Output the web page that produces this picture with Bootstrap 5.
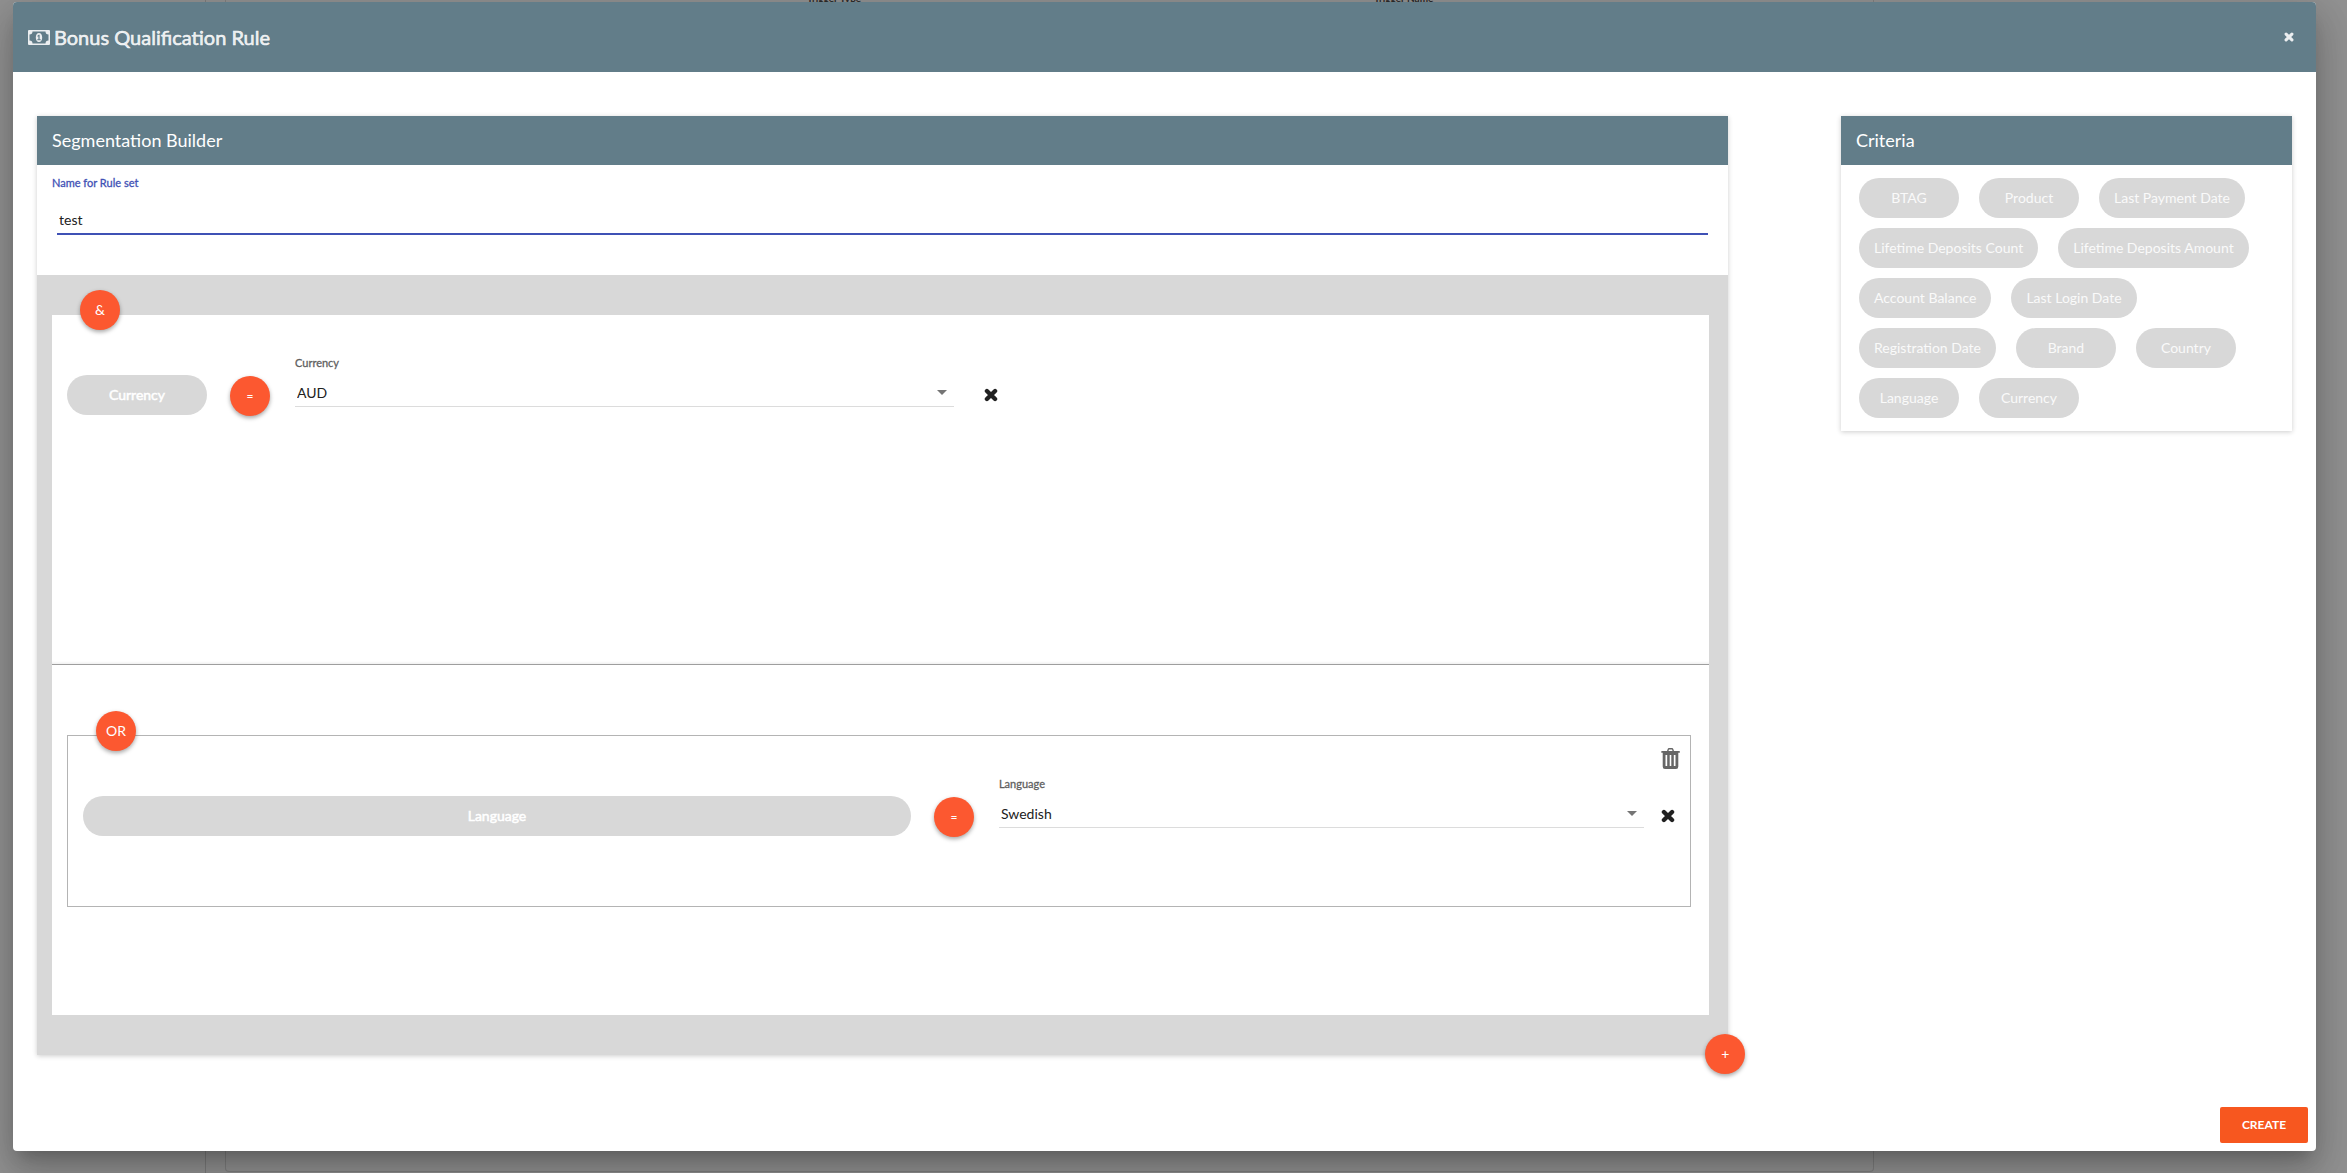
<!DOCTYPE html>
<html lang="en">
<head>
<meta charset="utf-8">
<meta name="viewport" content="width=device-width, initial-scale=1">
<title>Bonus Qualification Rule</title>
<link rel="stylesheet" href="https://cdn.jsdelivr.net/npm/bootstrap@5.3.0/dist/css/bootstrap.min.css">
<style>
  :root { --slate: #627d89; --flame: #fc5830; --mist: #d8d8d8; --ink: #212121; }
  body { font-family: Lato, sans-serif; font-size: 14px; line-height: 20px; color: var(--ink); background: #929292; min-height: 100vh; overflow: hidden; }

  /* page behind the dialog */
  .backdrop-page { position: absolute; inset: 0; z-index: 0; overflow: hidden; }
  .backdrop-side { flex: 0 0 206px; border-right: 1px solid #7c7c7c; }
  .backdrop-panel { margin-left: 19px; width: 1649px; border: 1px solid #7f7f7f; border-top: 0; border-radius: 0 0 4px 4px; height: 1172px; }
  .backdrop-labels { padding-left: 581px; font-size: 10px; font-weight: 700; line-height: 14px; margin-top: -9px; color: #2b2b2b; }
  .backdrop-labels span { flex: 0 0 567px; }
  .backdrop-labels span:last-child { flex: none; }

  .dialog-shell { z-index: 1; margin: 2px 31px 22px 13px; min-height: calc(100vh - 24px); background: #fff; border-radius: 4px;
    box-shadow: 0 11px 15px -7px rgba(0,0,0,.2), 0 24px 38px 3px rgba(0,0,0,.14), 0 9px 46px 8px rgba(0,0,0,.12); }
  .dialog-head { height: 70px; background: var(--slate); color: rgba(255,255,255,.87); border-radius: 4px 4px 0 0; padding: 0 22px 0 15px; }
  .dialog-head h1 { font-size: 20px; line-height: 24px; font-weight: 400; -webkit-text-stroke: .6px; margin: 0; }
  .dialog-main { padding: 44px 24px 0; }
  .icon-btn { background: none; border: 0; padding: 0; color: inherit; line-height: 0; flex: none; }

  .sheet { background: #fff; box-shadow: 0 1px 5px rgba(0,0,0,.2); }
  .sheet-head { background: var(--slate); color: #fff; height: 49px; padding: 0 15px; font-size: 18px; font-weight: 400; line-height: 49px; margin: 0; }
  .builder { width: 75%; }
  .criteria { width: 20%; }

  .rule-name { height: 110px; padding: 10px 20px 0 15px; }
  .tiny-label { font-size: 11px; line-height: 16px; font-weight: 400; color: #5f5f5f; -webkit-text-stroke: .3px; }
  .rule-name .tiny-label { color: #3f51b5; }
  .rule-name input { border: 0; border-bottom: 2px solid #3f51b5; border-radius: 0; padding: 4px 2px 0; height: 33px; margin: 11px 0 0 5px; width: calc(100% - 5px); font-size: 14px; color: var(--ink); background: transparent; outline: 0; }

  .canvas-area { background: var(--mist); padding: 40px 19px 40px 15px; }
  .rule-zone { background: #fff; }
  .zone-top { height: 350px; border-bottom: 1px solid #9e9e9e; padding: 40px 15px 0; box-shadow: inset 0 -3px 3px -2px rgba(0,0,0,.08); }
  .zone-bottom { height: 350px; padding: 70px 18px 0 15px; }
  .or-group { border: 1px solid #b4b4b4; height: 172px; padding: 40px 15px 0; }

  .round-btn { width: 40px; height: 40px; border: 0; border-radius: 50%; padding: 0; background: var(--flame); color: #fff; font-size: 14px; line-height: 40px; text-align: center; box-shadow: 0 2px 4px rgba(0,0,0,.35); flex: none; }
  .round-btn.sign { font-size: 12px; margin: 2px 25px 0 23px; }
  .pin-group { left: 28px; top: -25px; }
  .pin-trash { right: 10px; top: 12px; color: #666; }
  .pin-add { right: -17px; bottom: -19px; }

  .pill { height: 40px; border: 0; border-radius: 20px; background: var(--mist); color: #fafafa; font-size: 14px; line-height: 40px; padding: 0 15px; min-width: 100px; text-align: center; }
  .pill.picked { color: #fff; -webkit-text-stroke: .5px; padding: 0; }
  .pill-fixed { width: 140px; }
  .pill-half { width: 52%; }
  .picker { padding-bottom: 28px; }
  .picker-part { width: 40.5%; }
  .picker select { display: block; width: 100%; appearance: none; border: 0; border-bottom: 1px solid #dcdcdc; border-radius: 0; background: transparent; font-size: 14px; height: 28px; padding: 0 24px 0 2px; color: var(--ink); }
  .picker label { display: block; margin-bottom: 8px; }
  .picker-arrow { right: 7px; bottom: 40px; width: 0; height: 0; border: 5px solid transparent; border-top-color: #757575; border-bottom: 0; pointer-events: none; }
  .after-part { margin-left: 30px; }
  .after-fill { margin-left: 17px; }

  .pill-list { padding: 13px 15px 13px 18px; gap: 10px 20px; }
  .dialog-foot { padding: 8px; }
  .btn-create { background: #f7571f; color: #fff; font-size: 12px; line-height: 36px; font-weight: 700; height: 36px; width: 88px; padding: 0; border: 0; border-radius: 2px; }
  .btn-create:hover { background: #e24c17; color: #fff; }
</style>
<script src="https://cdn.jsdelivr.net/npm/bootstrap@5.3.0/dist/js/bootstrap.bundle.min.js"></script>
</head>
<body class="d-flex flex-column position-relative">

<svg width="0" height="0" class="position-absolute" aria-hidden="true">
  <symbol id="cross" viewBox="0 0 12 12"><path d="M2.5 2.5 9.500 9.500M9.500 2.500 2.500 9.500" stroke="currentColor" stroke-width="3.700" stroke-linecap="round"/></symbol>
</svg>

<div class="backdrop-page d-flex" aria-hidden="true">
  <div class="backdrop-side"></div>
  <div class="backdrop-panel">
    <div class="backdrop-labels d-flex"><span>Trigger Type</span><span>Trigger Name</span></div>
  </div>
</div>

<div class="dialog-shell position-relative d-flex flex-column flex-grow-1" role="dialog" aria-labelledby="dlgTitle">
  <header class="dialog-head d-flex align-items-center justify-content-between">
    <div class="d-flex align-items-center gap-1">
      <svg width="22" height="15" viewBox="0 0 22 15" aria-hidden="true">
        <path fill="currentColor" fill-rule="evenodd" d="M1 0H21Q22 0 22 1V14Q22 15 21 15H1Q0 15 0 14V1Q0 0 1 0ZM4.500 1.500A3 3 0 0 1 1.500 4.500V10.500A3 3 0 0 1 4.500 13.500H17.500A3 3 0 0 1 20.500 10.500V4.500A3 3 0 0 1 17.500 1.500ZM11 3C13 3 14.200 5 14.200 7.500S13 12 11 12 7.800 10 7.800 7.500 9 3 11 3ZM10.600 4.700 9.200 6 9.900 6.700 10.400 6.300V9.200H9.300V10.200H12.700V9.200H11.600V4.700Z"/>
      </svg>
      <h1 id="dlgTitle">Bonus Qualification Rule</h1>
    </div>
    <button type="button" class="icon-btn" aria-label="Close"><svg width="10" height="12"><use href="#cross"/></svg></button>
  </header>

  <main class="dialog-main d-flex justify-content-between align-items-start">
    <section class="builder sheet position-relative">
      <h2 class="sheet-head">Segmentation Builder</h2>
      <div class="rule-name">
        <label class="tiny-label d-block" for="ruleName">Name for Rule set</label>
        <input type="text" id="ruleName" value="test">
      </div>
      <div class="canvas-area">
        <div class="rule-zone position-relative">
          <button type="button" class="round-btn pin-group position-absolute">&amp;</button>
          <div class="zone-top">
            <div class="d-flex align-items-center">
              <button type="button" class="pill picked pill-fixed">Currency</button>
              <button type="button" class="round-btn sign">=</button>
              <div class="picker picker-part position-relative">
                <label class="tiny-label" for="currency">Currency</label>
                <select id="currency"><option>AUD</option></select>
                <span class="picker-arrow position-absolute"></span>
              </div>
              <button type="button" class="icon-btn after-part" aria-label="Remove currency"><svg width="14" height="14"><use href="#cross"/></svg></button>
            </div>
          </div>
          <div class="zone-bottom">
            <div class="or-group position-relative">
              <button type="button" class="round-btn pin-group position-absolute">OR</button>
              <button type="button" class="icon-btn pin-trash position-absolute" aria-label="Delete group">
                <svg width="19" height="21" viewBox="0 0 19 21"><path fill="currentColor" fill-rule="evenodd" d="M6 3 6.700 1Q7 0 8 0H11Q12 0 12.300 1L13 3H18Q19 3 19 4T18 4.700H17.300V18.500Q17.300 21 15 21H4Q1.700 21 1.700 18.500V4.700H1Q0 4.700 0 4T1 3ZM7.500 3H11.500L11 1.500H8ZM4.500 7V18H6.200V7ZM8.700 7V18H10.300V7ZM12.800 7V18H14.500V7Z"/></svg>
              </button>
              <div class="d-flex align-items-center">
                <button type="button" class="pill picked pill-half">Language</button>
                <button type="button" class="round-btn sign">=</button>
                <div class="picker position-relative flex-grow-1">
                  <label class="tiny-label" for="language">Language</label>
                  <select id="language"><option>Swedish</option></select>
                  <span class="picker-arrow position-absolute"></span>
                </div>
                <button type="button" class="icon-btn after-fill" aria-label="Remove language"><svg width="14" height="14"><use href="#cross"/></svg></button>
              </div>
            </div>
          </div>
        </div>
      </div>
      <button type="button" class="round-btn pin-add position-absolute" aria-label="Add group">+</button>
    </section>

    <aside class="criteria sheet">
      <h2 class="sheet-head">Criteria</h2>
      <div class="pill-list d-flex flex-wrap">
        <button type="button" class="pill">BTAG</button>
        <button type="button" class="pill">Product</button>
        <button type="button" class="pill">Last Payment Date</button>
        <button type="button" class="pill">Lifetime Deposits Count</button>
        <button type="button" class="pill">Lifetime Deposits Amount</button>
        <button type="button" class="pill">Account Balance</button>
        <button type="button" class="pill">Last Login Date</button>
        <button type="button" class="pill">Registration Date</button>
        <button type="button" class="pill">Brand</button>
        <button type="button" class="pill">Country</button>
        <button type="button" class="pill">Language</button>
        <button type="button" class="pill">Currency</button>
      </div>
    </aside>
  </main>

  <footer class="dialog-foot d-flex justify-content-end mt-auto">
    <button type="button" class="btn btn-create">CREATE</button>
  </footer>
</div>
</body>
</html>
